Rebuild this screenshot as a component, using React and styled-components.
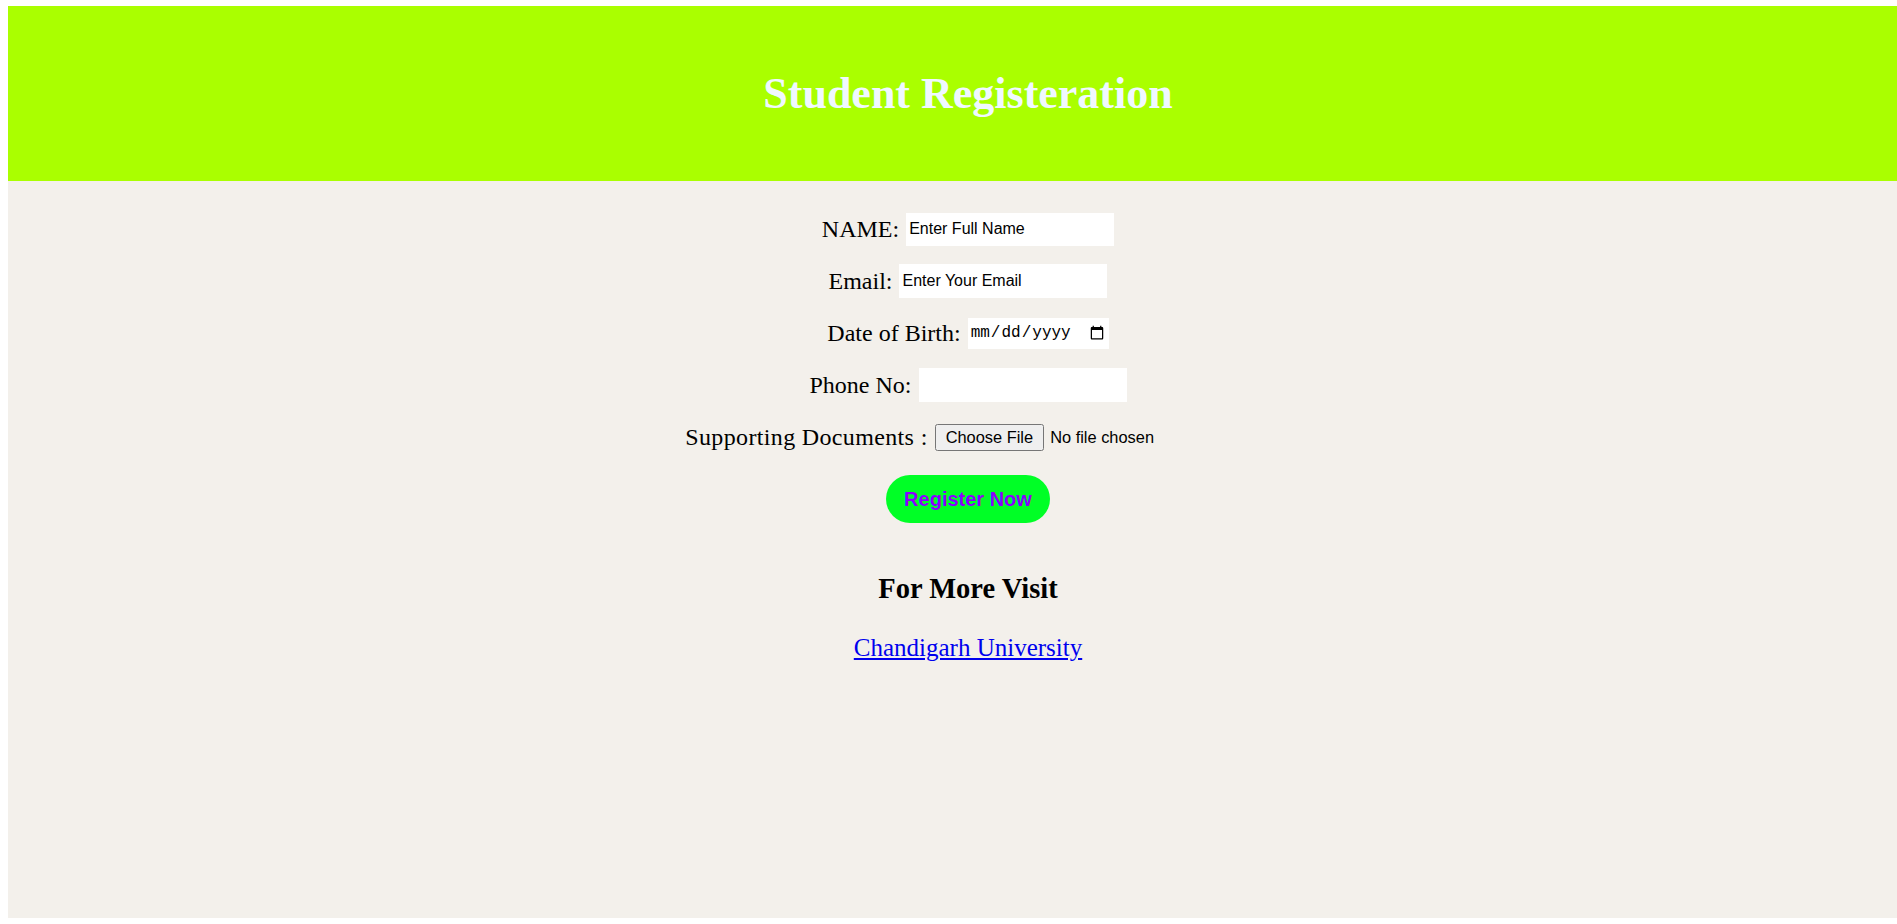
import React from 'react';
import styled, { createGlobalStyle } from 'styled-components';

const GlobalStyle = createGlobalStyle`
    html, body {
        margin: 0;
        padding: 0;
        overflow: hidden;
        background: #ffffff;
    }
`;

const Page = styled.div`
    margin: 6px 0 0 8px;
    width: 1920px;
    height: 912px;
    background-color: #f3f0eb;
    font-family: 'Liberation Serif', 'Times New Roman', serif;
    color: #000;
`;

const Header = styled.header`
    height: 175px;
    background-color: #aaff00;
    display: flex;
    align-items: center;
    justify-content: center;
    h1 {
        margin: 0;
        font-size: 44px;
        font-weight: bold;
        color: aliceblue;
    }
`;

const Form = styled.form`
    display: flex;
    flex-direction: column;
    align-items: center;
    padding-top: 22px;
`;

const Row = styled.div`
    height: 52px;
    display: flex;
    align-items: center;
    justify-content: center;
    gap: 7px;
    font-size: 24px;
    letter-spacing: ${props => props.$wide ? '0.35px' : '0'};
`;

const TextInput = styled.input`
    box-sizing: border-box;
    width: 208px;
    height: ${props => props.$tall ? '34px' : '33px'};
    border: none;
    outline: none;
    background: #fff;
    padding: 0 3px;
    font-family: 'Liberation Sans', Arial, sans-serif;
    font-size: 16px;
    color: #000;
    &::placeholder {
        color: #000;
    }
`;

const DateInput = styled.input`
    box-sizing: border-box;
    width: 141px;
    height: 31px;
    border: none;
    background: #fff;
    padding: 0 2px;
    font-family: 'Liberation Mono', 'Courier New', monospace;
    font-size: 16px;
    color: #000;
`;

const FileInput = styled.input`
    width: 316px;
    letter-spacing: 0;
    font-family: 'Liberation Sans', Arial, sans-serif;
    font-size: 16.4px;
    color: #000;
    &::file-selector-button {
        padding: 2px 9px;
        margin-right: 6px;
    }
`;

const RegisterButton = styled.button`
    margin-top: 12px;
    height: 48px;
    padding: 0 18px;
    border: none;
    border-radius: 24px;
    background-color: #00ff26;
    color: #8a00ff;
    font-family: 'Liberation Sans', Arial, sans-serif;
    font-size: 20px;
    font-weight: bold;
    cursor: pointer;
`;

const Footer = styled.div`
    display: flex;
    flex-direction: column;
    align-items: center;
    h2 {
        margin: 50px 0 0;
        font-size: 28.5px;
        line-height: 32px;
    }
    a {
        margin-top: 29px;
        font-size: 25px;
        line-height: 28px;
        color: #0000ee;
    }
`;

export default function App() {
    return (
        <>
            <GlobalStyle />
            <Page>
                <Header>
                    <h1>Student Registeration</h1>
                </Header>
                <Form onSubmit={e => e.preventDefault()}>
                    <Row>
                        NAME:
                        <TextInput type="text" placeholder="Enter Full Name" />
                    </Row>
                    <Row>
                        Email:
                        <TextInput type="email" placeholder="Enter Your Email" $tall />
                    </Row>
                    <Row>
                        Date of Birth:
                        <DateInput type="date" />
                    </Row>
                    <Row>
                        Phone No:
                        <TextInput type="tel" $tall />
                    </Row>
                    <Row $wide>
                        Supporting Documents :
                        <FileInput type="file" />
                    </Row>
                    <RegisterButton type="submit">Register Now</RegisterButton>
                </Form>
                <Footer>
                    <h2>For More Visit</h2>
                    <a href="#">Chandigarh University</a>
                </Footer>
            </Page>
        </>
    );
}
